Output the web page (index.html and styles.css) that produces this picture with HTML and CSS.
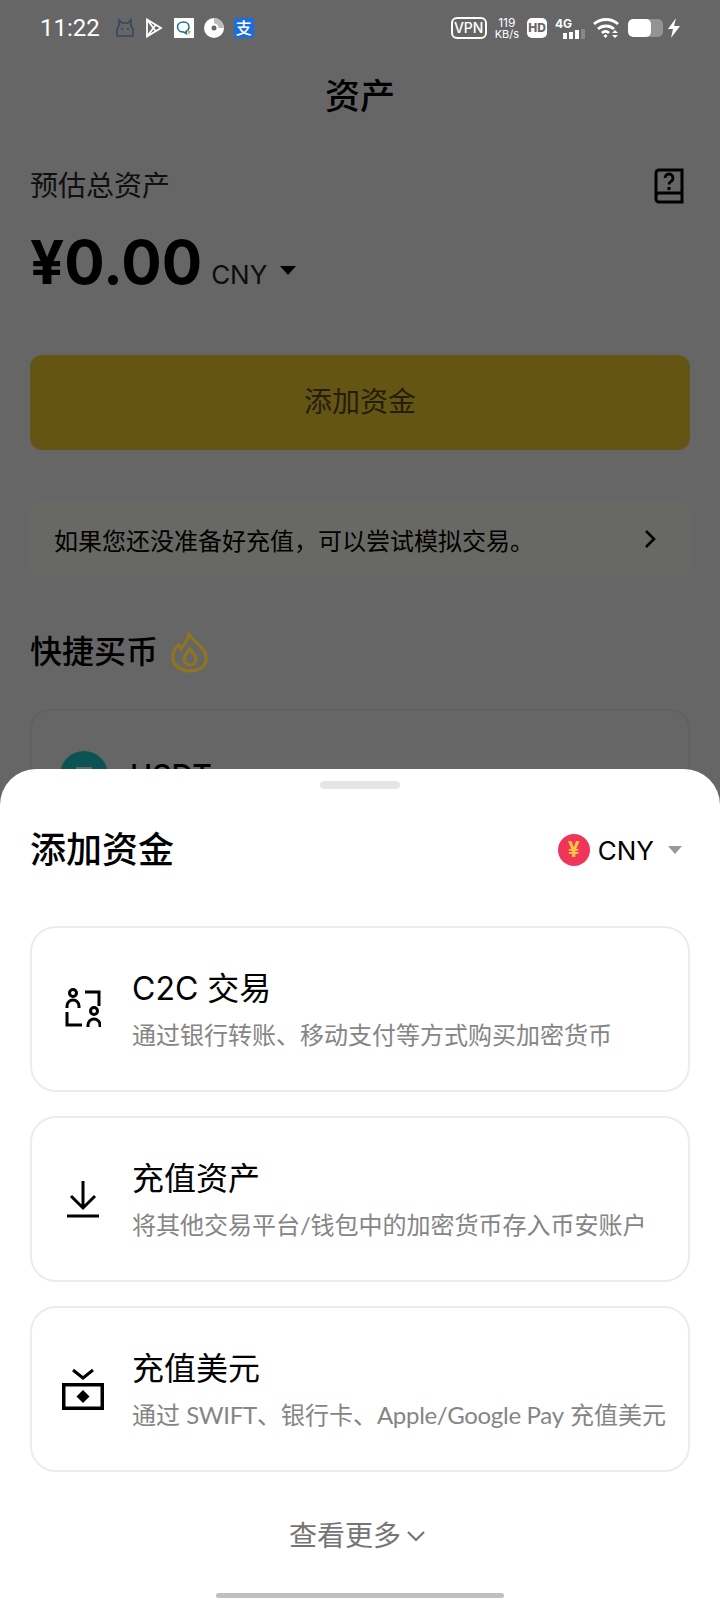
FILE: index.html
```html
<!DOCTYPE html>
<html lang="zh-CN">
<head>
  <meta charset="UTF-8">
  <title>资产</title>
  <link rel="stylesheet" href="styles.css">
</head>
<body>
  <div class="page">
    <!-- page under the sheet -->
    <div class="content">
      <h1 class="page-title">资产</h1>
      <div class="total-head">
        <span class="total-label">预估总资产</span>
        <svg class="book" width="32" height="36" viewBox="0 0 32 36" fill="none" stroke="#000" stroke-width="3">
          <path d="M3 28V5a3 3 0 0 1 3-3h23v32H6a3 3 0 0 1-3-3v-3a3 3 0 0 1 3-3h23"/>
          <path d="M12 10a4 4 0 1 1 6 3.500q-2 1-2 3" stroke-width="2.800"/>
          <circle cx="16" cy="20.500" r="1.800" fill="#000" stroke="none"/>
        </svg>
      </div>
      <div class="total-row">
        <span class="total-value">¥0.00</span>
        <span class="total-unit">CNY</span>
        <span class="arrow-down"></span>
      </div>
      <div class="add-btn">添加资金</div>
      <div class="demo-banner">
        <span>如果您还没准备好充值，可以尝试模拟交易。</span>
        <svg width="14" height="20" viewBox="0 0 14 20" fill="none" stroke="#000" stroke-width="2.600"><path d="M3 2l8 8-8 8"/></svg>
      </div>
      <div class="quick-head">
        <h2>快捷买币</h2>
        <svg class="flame" width="38" height="42" viewBox="0 0 38 42" fill="none" stroke="#8f7520" stroke-width="3.200">
          <path d="M18 2c1 5 6 8 11 13 5 5 7 10 6 15-2 7-9 10-16 10C11 40 4 36 2 29c-1-6 1-11 6-15l2 4c3-4 7-9 8-16z"/>
          <path d="M19 18c2 3 6 6 6 10a6 6 0 0 1-12 0c0-4 4-7 6-10z"/>
        </svg>
      </div>
      <div class="quick-card">
        <div class="coin-icon"><div class="coin-mark"></div></div>
        <span class="coin-name">USDT</span>
      </div>
    </div>

    <div class="scrim"></div>

    <div class="statusbar">
      <div class="status-left">
        <span class="clock">11:22</span>
        <svg width="18" height="20" viewBox="0 0 18 20" fill="none" stroke="#36465e" stroke-width="1.600"><path d="M3 2l3 3h6l3-3v6l2 3v7H1v-7l2-3z"/><path d="M5 11h2M11 11h2"/></svg>
        <svg class="play" width="18" height="20" viewBox="0 0 18 20" fill="none" stroke="#fff" stroke-width="1.800"><path d="M2 1.500l14 8.500-14 8.500zM2 1.500l9 12M2 18.500l9-12"/></svg>
        <svg width="20" height="20" viewBox="0 0 20 20" fill="none"><rect width="20" height="20" fill="#fff"/><path d="M9.500 4c-3.500 0-6 2-6 5s2.500 5 6 5l3 1.500-.5-2c2-.8 3-2.500 3-4.500 0-3-2.500-5-5.500-5z" stroke="#1f6f8f" stroke-width="1.500"/><path d="M13 12l4 1-2 4z" fill="#c9b458"/></svg>
        <svg width="20" height="20" viewBox="0 0 20 20"><circle cx="10" cy="10" r="10" fill="#fff"/><path d="M10 0a10 10 0 0 1 10 10h-6a4 4 0 0 0-4-4z" fill="#bbb"/><circle cx="10" cy="10" r="4.500" fill="#fff"/><circle cx="10" cy="10" r="2.500" fill="#666"/></svg>
        <span class="pay-tile">支</span>
      </div>
      <div class="status-right">
        <span class="vpn">VPN</span>
        <span class="speed"><b>119</b><br>KB/s</span>
        <span class="hd">HD</span>
        <div class="signal">
          <span class="net">4G</span>
          <div class="bars"><i></i><i></i><i></i><i class="off"></i></div>
        </div>
        <svg width="27" height="22" viewBox="0 0 27 22" fill="none" stroke="#fff" stroke-width="2.800">
          <path d="M1 7c7-6 17-6 24 0M5 12c4.500-4 11.500-4 16 0M9 16c2-2 5-2 7 0"/>
          <path d="M10.500 19l2-2 2 2-2 2z" fill="#fff" stroke="none"/>
          <path d="M19 16l3-3 3 3zM19 18l3 3 3-3z" fill="#fff" stroke="none"/>
        </svg>
        <div class="battery"><div class="battery-fill" style="width: 65%"></div></div>
        <svg width="12" height="20" viewBox="0 0 12 20"><path d="M8 0L0 11h5l-2 9 9-12H6z" fill="#fff"/></svg>
      </div>
    </div>

    <!-- bottom sheet -->
    <div class="sheet">
      <div class="handle"></div>
      <div class="sheet-head">
        <h2>添加资金</h2>
        <div class="currency">
          <span class="currency-icon">¥</span>
          <span class="currency-name">CNY</span>
          <span class="arrow-gray"></span>
        </div>
      </div>

      <div class="option">
        <div class="option-icon">
          <svg width="36" height="42" viewBox="0 0 36 42" fill="none" stroke="#000" stroke-width="3">
            <circle cx="8" cy="5" r="3.500"/>
            <path d="M2 20v-2a6 6 0 0 1 12 0v2"/>
            <path d="M20 4h14v14"/>
            <circle cx="29" cy="23" r="3.500"/>
            <path d="M23 39v-2a6 6 0 0 1 12 0v2"/>
            <path d="M2 24v13h15"/>
          </svg>
        </div>
        <div class="option-text">
          <div class="option-title">C2C 交易</div>
          <div class="option-desc">通过银行转账、移动支付等方式购买加密货币</div>
        </div>
      </div>

      <div class="option">
        <div class="option-icon">
          <svg width="34" height="38" viewBox="0 0 34 38" fill="none" stroke="#000" stroke-width="3">
            <path d="M17 1v27M5 16l12 12 12-12"/>
            <path d="M1 36h32"/>
          </svg>
        </div>
        <div class="option-text">
          <div class="option-title">充值资产</div>
          <div class="option-desc">将其他交易平台<span class="latin">/</span>钱包中的加密货币存入币安账户</div>
        </div>
      </div>

      <div class="option">
        <div class="option-icon">
          <svg width="42" height="42" viewBox="0 0 42 42" fill="none" stroke="#000" stroke-width="3.500">
            <path d="M11 2l10 8 10-8" stroke-width="3"/>
            <rect x="1.750" y="16.750" width="38.500" height="23.500"/>
            <path d="M21 22l6.500 6.500L21 35l-6.500-6.500z" fill="#000" stroke="none"/>
          </svg>
        </div>
        <div class="option-text">
          <div class="option-title">充值美元</div>
          <div class="option-desc">通过 <span class="latin">SWIFT</span>、银行卡、<span class="latin">Apple/Google Pay</span> 充值美元</div>
        </div>
      </div>

      <div class="more">
        <span>查看更多</span>
        <svg width="20" height="12" viewBox="0 0 20 12" fill="none" stroke="#757575" stroke-width="2.200"><path d="M2 2l8 8 8-8"/></svg>
      </div>
      <div class="home-bar"></div>
    </div>
  </div>
</body>
</html>
```

FILE: styles.css
```css
* { box-sizing: border-box; }
body { margin: 0; font-family: "Inter", "Noto Sans CJK SC", sans-serif; color: #000; }
h1, h2 { margin: 0; }

.page { position: relative; width: 720px; height: 1600px; overflow: hidden; background: #fff; }
.content { padding: 72px 30px 0; }
.page-title { font-size: 35px; font-weight: 500; line-height: 48px; text-align: center; }

.total-head { display: flex; justify-content: space-between; align-items: center; margin-top: 46px; padding-right: 5px; }
.total-label { font-size: 28px; line-height: 40px; color: #2a2a2a; }
.total-row { display: flex; align-items: baseline; margin-top: 17px; }
.total-value { font-size: 60px; font-weight: 700; line-height: 78px; }
.total-unit { font-size: 26px; margin-left: 9px; color: #1e2329; }
.arrow-down { width: 0; height: 0; margin-left: 13px; border: 8px solid transparent; border-top: 9px solid #000; border-bottom: 0; transform: translateY(-9px); }

.add-btn { height: 95px; margin-top: 54px; border-radius: 12px; background: #fcd535; color: #5a4c1c; font-size: 28px; line-height: 95px; text-align: center; }
/* these two sit above the scrim, their tint is lighter than the dimmed page */
.demo-banner { position: relative; z-index: 1; display: flex; justify-content: space-between; align-items: center; height: 74px; margin-top: 52px; padding: 0 33px 0 24px; border-radius: 10px; background: #686865; font-size: 24px; }
.flame { position: relative; z-index: 1; }

.quick-head { display: flex; align-items: center; gap: 13px; margin-top: 53px; }
.quick-head h2 { font-size: 32px; font-weight: 500; line-height: 46px; }
.quick-card { display: flex; align-items: center; gap: 22px; height: 180px; margin-top: 34px; padding: 0 28px 48px; border: 2px solid #f0f0f0; border-radius: 20px; }
.coin-icon { width: 48px; height: 48px; padding-top: 16px; border-radius: 50%; background: #20d0d0; }
.coin-mark { width: 16px; height: 24px; margin: 0 auto; background: #fff; }
.coin-name { font-size: 30px; font-weight: 500; }

.scrim { position: absolute; inset: 0; background: rgba(0, 0, 0, .6); }

.statusbar { position: absolute; z-index: 2; top: 0; left: 0; right: 0; height: 56px; padding: 0 40px; display: flex; justify-content: space-between; align-items: center; color: #fff; }
.status-left { display: flex; align-items: center; gap: 10px; }
.clock { font-family: "Roboto", sans-serif; font-size: 24px; margin-right: 6px; }
.play { margin: 0 1px; }
.pay-tile { width: 20px; height: 20px; border-radius: 2px; background: #1a6de0; color: #fff; font-size: 16px; font-weight: 500; line-height: 20px; text-align: center; }
.status-right { display: flex; align-items: center; gap: 8px; }
.vpn { width: 36px; height: 22px; border: 2px solid #fff; border-radius: 6px; font-size: 14px; font-weight: 500; line-height: 18px; text-align: center; }
.speed { font-size: 11px; line-height: 11px; text-align: center; }
.speed b { font-size: 12px; font-weight: 400; }
.hd { width: 20px; height: 20px; border-radius: 5px; background: #fff; color: #666; font-size: 12px; font-weight: 800; line-height: 20px; text-align: center; }
.signal { display: flex; flex-direction: column; width: 30px; }
.net { font-size: 12px; font-weight: 700; line-height: 11px; }
.bars { display: flex; align-items: flex-end; justify-content: flex-end; gap: 2px; height: 10px; }
.bars i { width: 4px; height: 6px; background: #fff; }
.bars i:nth-child(2) { height: 7px; }
.bars i:nth-child(3) { height: 9px; }
.bars i.off { height: 10px; background: #888; }
.battery { width: 35px; height: 18px; margin-right: -3px; border-radius: 5px; background: #939393; overflow: hidden; }
.battery-fill { height: 100%; border-radius: 5px; background: #fff; }

.sheet { position: absolute; z-index: 3; left: 0; right: 0; bottom: 0; height: 831px; padding: 0 30px; background: #fff; border-radius: 36px 36px 0 0; }
.handle { width: 80px; height: 8px; margin: 12px auto 0; border-radius: 4px; background: #e5e5e5; }
.sheet-head { display: flex; justify-content: space-between; align-items: center; height: 60px; margin-top: 28px; }
.sheet-head h2 { font-size: 36px; font-weight: 500; }
.currency { display: flex; align-items: center; margin-top: 6px; padding-right: 8px; }
.currency-icon { width: 32px; height: 32px; border-radius: 50%; background: #f0355a; color: #ffc83d; font-size: 21px; font-weight: 700; line-height: 32px; text-align: center; }
.currency-name { margin-left: 8px; font-size: 26px; }
.arrow-gray { width: 0; height: 0; margin-left: 14px; border: 7px solid transparent; border-top: 8px solid #999; border-bottom: 0; }

.option { display: flex; align-items: center; height: 166px; margin-bottom: 24px; border: 2px solid #ececec; border-radius: 26px; }
.sheet-head + .option { margin-top: 49px; }
.option-icon { display: flex; justify-content: center; width: 100px; padding-left: 2px; flex-shrink: 0; }
.option-title { font-size: 32px; line-height: 44px; }
.option-desc { margin-top: 7px; font-family: "Lato", "Noto Sans CJK SC", sans-serif; font-size: 24px; line-height: 34px; color: #858585; white-space: nowrap; }
.latin { letter-spacing: -.3px; }

.more { display: flex; justify-content: center; align-items: center; gap: 5px; margin-top: 44px; padding-right: 5px; font-size: 28px; line-height: 40px; color: #757575; }
.home-bar { position: absolute; left: 216px; bottom: 2px; width: 288px; height: 5px; border-radius: 3px; background: #c0c0c0; }
```
